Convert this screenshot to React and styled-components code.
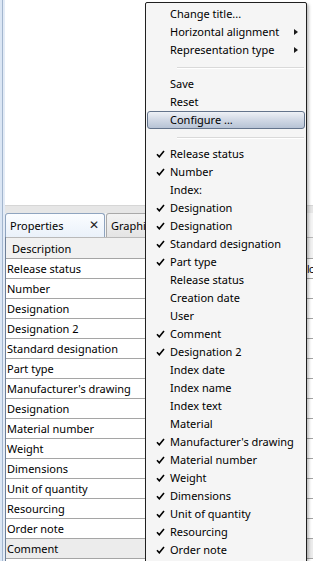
import React from "react";
import styled, { createGlobalStyle } from "styled-components";

const Global = createGlobalStyle`
  html, body { margin: 0; padding: 0; background: #fff; overflow: hidden; }
  body { font-family: "Noto Sans", "Open Sans", sans-serif; }
`;

const Page = styled.div`
  position: relative;
  width: 313px;
  height: 561px;
  display: flex;
  overflow: hidden;
  background: #fff;
`;

const LeftStrip = styled.div`
  width: 5px;
  flex: none;
  background: linear-gradient(90deg, #dbe6f4 0 2px, #a3b6ce 2px 3px, #e3ebf6 3px 5px);
`;

const Main = styled.div`
  flex: 1;
  display: flex;
  flex-direction: column;
  min-width: 0;
`;

const TopPane = styled.div`
  height: 205px;
  background: #fff;
  flex: none;
`;

const TabBar = styled.div`
  height: 32px;
  box-sizing: border-box;
  padding-top: 8px;
  background: linear-gradient(#d6d6d6 0 1px, #e6e6e6 1px 8px, #f4f4f4 8px);
  display: flex;
  align-items: flex-end;
  gap: 1px;
  flex: none;
`;

const Tab = styled.div`
  height: 24px;
  box-sizing: border-box;
  width: ${(p) => p.$w}px;
  flex: none;
  display: flex;
  align-items: center;
  padding: 0 4px 1px 4px;
  border: 1px solid ${(p) => (p.$active ? "#8fa4bf" : "#a9a9a9")};
  border-bottom: none;
  border-radius: 3px 3px 0 0;
  background: ${(p) =>
    p.$active
      ? "linear-gradient(#fbfdff, #eaf1fa)"
      : "linear-gradient(#f3f3f3, #e4e4e4)"};
  font-size: 11px;
  color: #000;
  white-space: nowrap;
  overflow: hidden;
`;

const TabLabel = styled.span`
  flex: 1;
`;

const TabClose = styled.span`
  font-size: 12px;
  line-height: 1;
  color: #222;
  margin-right: 1px;
`;

const Grid = styled.div`
  display: flex;
  flex-direction: column;
  border-left: 1px solid #6e8099;
  flex: 1;
`;

const HeaderRow = styled.div`
  height: 22px;
  box-sizing: border-box;
  border-top: 1px solid #b9b9b9;
  border-bottom: 1px solid #a5a5a5;
  background: #f1f1f1;
  display: flex;
  align-items: center;
  padding-left: 6px;
  font-size: 11px;
  color: #000;
`;

const Row = styled.div`
  height: 20px;
  box-sizing: border-box;
  border-bottom: 1px solid #a5a5a5;
  background: ${(p) => (p.$shade ? "#ececec" : "#fff")};
  display: flex;
  align-items: center;
  font-size: 11px;
  color: #000;
`;

const NameCell = styled.div`
  padding-left: 1px;
  width: 300px;
  flex: none;
  white-space: nowrap;
`;

const ValueCell = styled.div`
  white-space: nowrap;
  font-size: 10px;
  letter-spacing: -0.5px;
`;

const Menu = styled.div`
  position: absolute;
  left: 145px;
  top: 2px;
  width: 162px;
  height: 562px;
  box-sizing: border-box;
  border: 1px solid #202020;
  border-radius: 2px;
  background: #f5f5f5;
  padding: 2px 1px;
  display: flex;
  flex-direction: column;
  font-size: 11px;
  color: #000;
  box-shadow: 2px 2px 3px rgba(0, 0, 0, 0.25);
`;

const Item = styled.div`
  height: 18px;
  flex: none;
  box-sizing: border-box;
  display: flex;
  align-items: center;
  position: relative;
  padding-left: 22px;
  padding-bottom: 1px;
  white-space: nowrap;
  border: 1px solid ${(p) => (p.$hl ? "#64748c" : "transparent")};
  border-radius: 3px;
  background: ${(p) =>
    p.$hl ? "linear-gradient(#eef1f6, #d3dae6 45%, #b7c3d5)" : "transparent"};
`;

const Check = styled.svg`
  position: absolute;
  left: 8px;
  top: 4px;
`;

const Arrow = styled.svg`
  position: absolute;
  right: 6px;
  top: 5px;
`;

const Separator = styled.div`
  height: 16px;
  flex: none;
  display: flex;
  align-items: center;
  padding-left: 30px;
  padding-right: 1px;
  &::after {
    content: "";
    flex: 1;
    height: 1px;
    background: #d9d9d9;
    box-shadow: 0 1px 0 #fff;
  }
`;

const CheckMark = () => (
  <Check width="9" height="8" viewBox="0 0 9 8">
    <path d="M1 4.2 L3.3 6.8 L8 1" fill="none" stroke="#000" strokeWidth="1.6" />
  </Check>
);

const SubArrow = () => (
  <Arrow width="4" height="6" viewBox="0 0 4 6">
    <path d="M0 0 L4 3 L0 6 Z" fill="#1a1a1a" />
  </Arrow>
);

const gridRows = [
  ["Release status", "lc"],
  ["Number"],
  ["Designation"],
  ["Designation 2"],
  ["Standard designation"],
  ["Part type"],
  ["Manufacturer's drawing"],
  ["Designation"],
  ["Material number"],
  ["Weight"],
  ["Dimensions"],
  ["Unit of quantity"],
  ["Resourcing"],
  ["Order note"],
  ["Comment", null, true],
];

const columns = [
  ["Release status", true],
  ["Number", true],
  ["Index:", false],
  ["Designation", true],
  ["Designation", true],
  ["Standard designation", true],
  ["Part type", true],
  ["Release status", false],
  ["Creation date", false],
  ["User", false],
  ["Comment", true],
  ["Designation 2", true],
  ["Index date", false],
  ["Index name", false],
  ["Index text", false],
  ["Material", false],
  ["Manufacturer's drawing", true],
  ["Material number", true],
  ["Weight", true],
  ["Dimensions", true],
  ["Unit of quantity", true],
  ["Resourcing", true],
  ["Order note", true],
];

export default function App() {
  return (
    <>
      <Global />
      <Page>
        <LeftStrip />
        <Main>
          <TopPane />
          <TabBar>
            <Tab $active $w={100}>
              <TabLabel>Properties</TabLabel>
              <TabClose>✕</TabClose>
            </Tab>
            <Tab $w={120}>
              <TabLabel>Graphics</TabLabel>
            </Tab>
          </TabBar>
          <Grid>
            <HeaderRow>Description</HeaderRow>
            {gridRows.map(([name, val, shade], i) => (
              <Row key={i} $shade={shade}>
                <NameCell>{name}</NameCell>
                {val && <ValueCell>{val}</ValueCell>}
              </Row>
            ))}
          </Grid>
        </Main>
        <Menu>
          <Item>Change title...</Item>
          <Item>
            Horizontal alignment
            <SubArrow />
          </Item>
          <Item>
            Representation type
            <SubArrow />
          </Item>
          <Separator />
          <Item>Save</Item>
          <Item>Reset</Item>
          <Item $hl>Configure ...</Item>
          <Separator />
          {columns.map(([label, checked], i) => (
            <Item key={i}>
              {checked && <CheckMark />}
              {label}
            </Item>
          ))}
        </Menu>
      </Page>
    </>
  );
}
